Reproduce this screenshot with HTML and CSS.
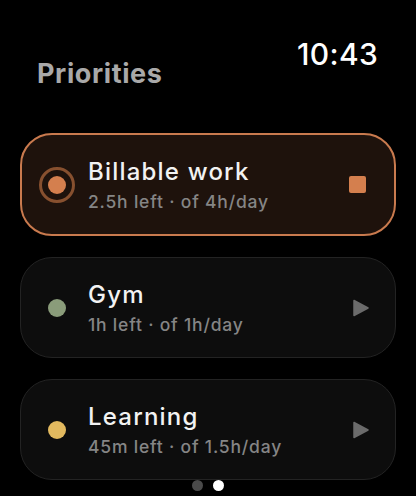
FILE: index.html
```html
<!DOCTYPE html>
<html lang="en">
<head>
    <meta charset="UTF-8">
    <meta name="viewport" content="width=device-width, initial-scale=1.0">
    <title>Priorities</title>
    <link rel="stylesheet" href="styles.css">
</head>
<body>
    <div class="screen">
        <header class="top-bar">
            <h1 class="page-title">Priorities</h1>
            <div class="clock">10:43</div>
        </header>

        <div class="task-list">
            <div class="task-card active">
                <div class="task-icon">
                    <span class="ring"><span class="dot dot-billable"></span></span>
                </div>
                <div class="task-text">
                    <div class="task-name">Billable work</div>
                    <div class="task-meta">2.5h left · of 4h/day</div>
                </div>
                <div class="task-action">
                    <span class="stop"></span>
                </div>
            </div>

            <div class="task-card">
                <div class="task-icon">
                    <span class="dot dot-gym"></span>
                </div>
                <div class="task-text">
                    <div class="task-name">Gym</div>
                    <div class="task-meta">1h left · of 1h/day</div>
                </div>
                <div class="task-action">
                    <svg class="play" width="16" height="18" viewBox="0 0 16 18"><path d="M1 1.5 L15 9 L1 16.5 Z" fill="#6b6b6b" stroke="#6b6b6b" stroke-width="1.5" stroke-linejoin="round"/></svg>
                </div>
            </div>

            <div class="task-card">
                <div class="task-icon">
                    <span class="dot dot-learning"></span>
                </div>
                <div class="task-text">
                    <div class="task-name">Learning</div>
                    <div class="task-meta">45m left · of 1.5h/day</div>
                </div>
                <div class="task-action">
                    <svg class="play" width="16" height="18" viewBox="0 0 16 18"><path d="M1 1.5 L15 9 L1 16.5 Z" fill="#6b6b6b" stroke="#6b6b6b" stroke-width="1.5" stroke-linejoin="round"/></svg>
                </div>
            </div>
        </div>

        <div class="pager">
            <span class="page-dot"></span>
            <span class="page-dot current"></span>
        </div>
    </div>
</body>
</html>
```

FILE: styles.css
```css
* {
    margin: 0;
    padding: 0;
    box-sizing: border-box;
    font-family: Inter, 'Noto Sans', sans-serif;
}

body {
    background: #000;
    color: #fff;
    width: 416px;
    height: 496px;
    overflow: hidden;
}

.screen {
    position: relative;
    height: 100%;
}

.top-bar {
    display: flex;
    justify-content: space-between;
    align-items: flex-start;
    padding: 36px 38px 0 37px;
    height: 133px;
}

.page-title {
    font-size: 27px;
    font-weight: 700;
    color: #a9a9a9;
    margin-top: 21px;
    letter-spacing: 0.6px;
}

.clock {
    font-size: 30px;
    font-weight: 500;
    color: #fff;
    letter-spacing: 0.3px;
}

.task-list {
    display: flex;
    flex-direction: column;
    gap: 21px;
    padding: 0 20px;
}

.task-card {
    display: flex;
    align-items: center;
    height: 101px;
    padding: 0 26px 0 17px;
    background: #0d0d0d;
    border: 1px solid #232323;
    border-radius: 32px;
}

.task-card.active {
    height: 103px;
    background: #1e120c;
    border: 2px solid #c97a4e;
    padding: 0 28px 0 16px;
}

.task-icon {
    width: 38px;
    display: flex;
    justify-content: center;
    align-items: center;
    flex-shrink: 0;
}

.ring {
    width: 36px;
    height: 36px;
    border: 3px solid #87502f;
    border-radius: 50%;
    display: flex;
    justify-content: center;
    align-items: center;
}

.dot {
    width: 18px;
    height: 18px;
    border-radius: 50%;
}

.dot-billable { background: #d47f4e; }
.dot-gym { background: #8a9c7a; }
.dot-learning { background: #e2b95f; }

.task-text {
    flex: 1;
    padding-left: 12px;
    margin-top: 0;
}

.task-name {
    font-size: 24px;
    font-weight: 500;
    line-height: 29px;
    color: #f2f2f2;
    letter-spacing: 1.2px;
}

.task-meta {
    font-size: 17.5px;
    font-weight: 500;
    line-height: 22px;
    color: #858585;
    margin-top: 5px;
    letter-spacing: 0.8px;
}

.task-action {
    display: flex;
    align-items: center;
}

.stop {
    width: 17px;
    height: 17px;
    background: #d47f4e;
    border-radius: 2px;
}

.pager {
    position: absolute;
    left: 0;
    right: 0;
    bottom: 5px;
    display: flex;
    justify-content: center;
    gap: 10px;
}

.page-dot {
    width: 11px;
    height: 11px;
    border-radius: 50%;
    background: #4a4a4a;
}

.page-dot.current {
    background: #fff;
}
```
